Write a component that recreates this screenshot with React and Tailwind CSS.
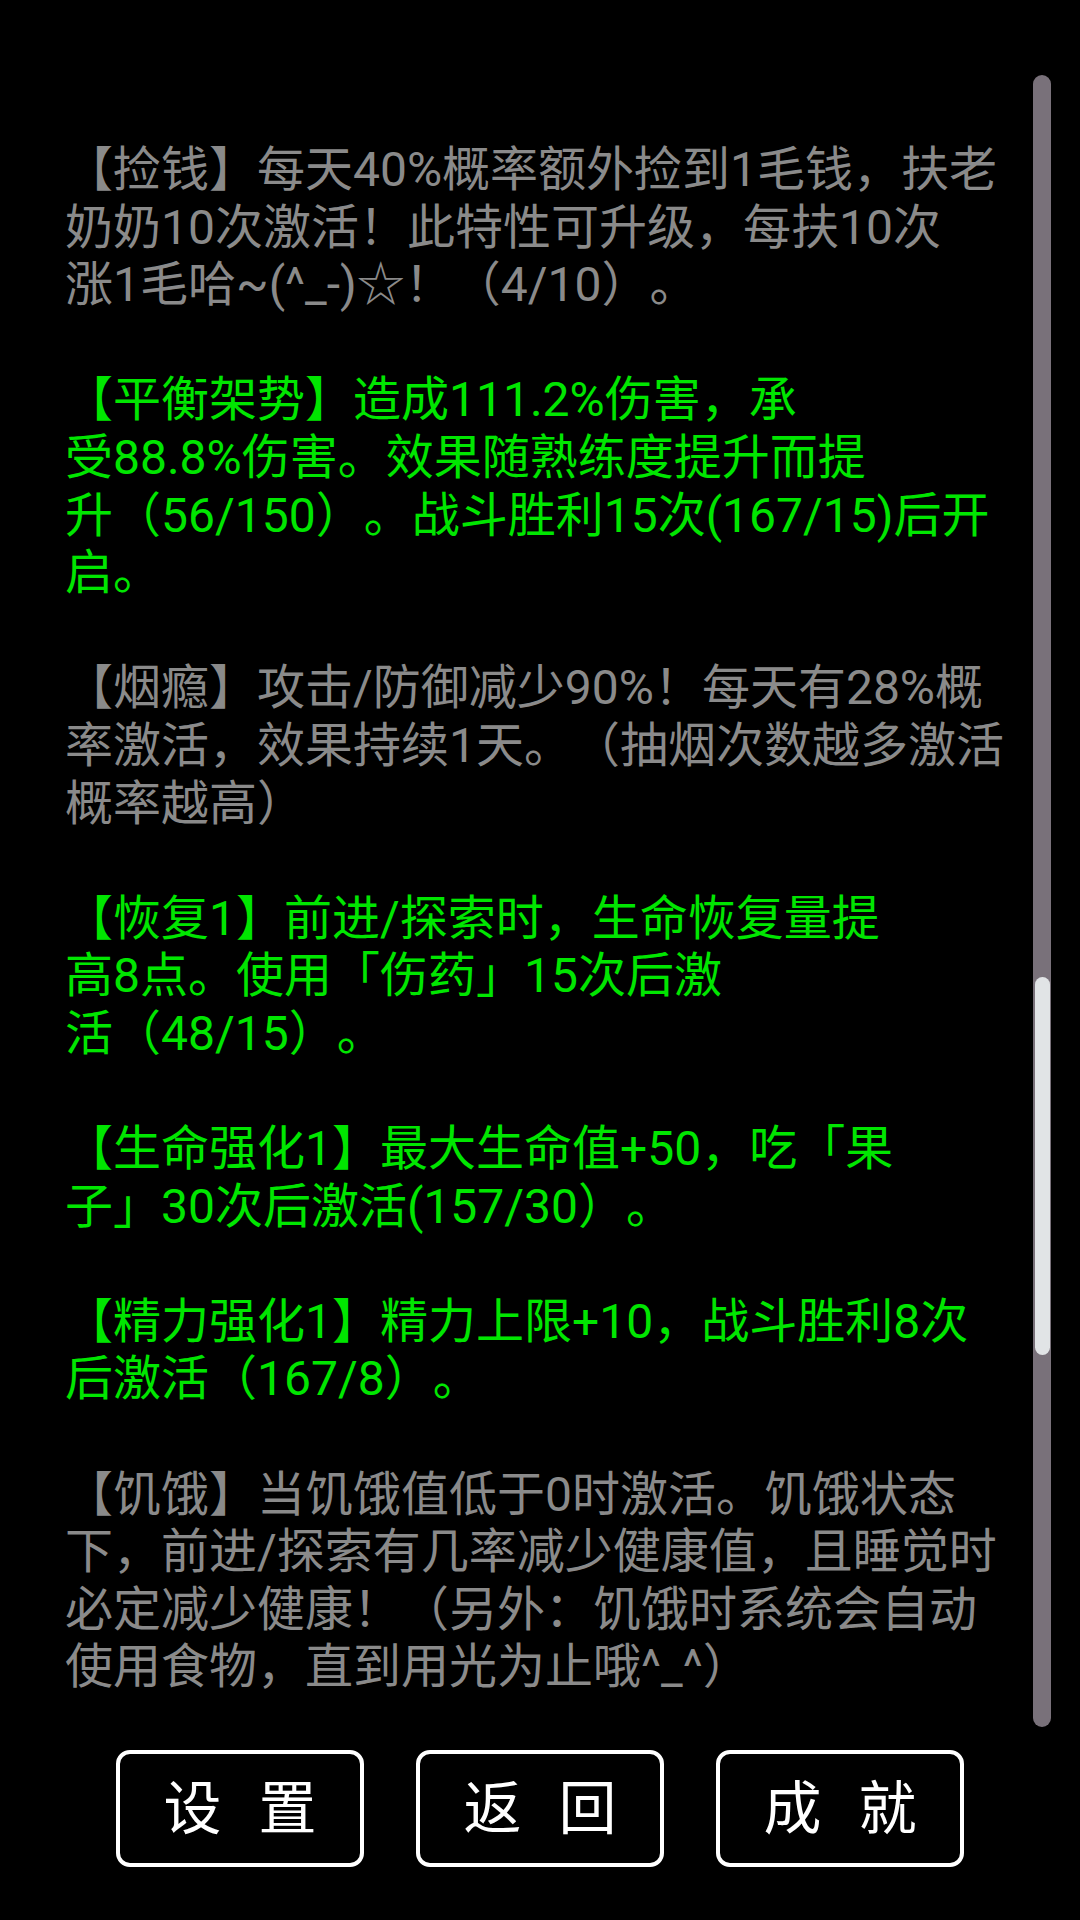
import React from "react";

const GRAY = "text-[#8a8a8a]";
const GREEN = "text-[#00e600]";

const paragraphs = [
  {
    tone: GRAY,
    lines: [
      "【捡钱】每天40%概率额外捡到1毛钱，扶老",
      "奶奶10次激活！此特性可升级，每扶10次",
      "涨1毛哈~(^_-)☆！（4/10）。",
    ],
  },
  {
    tone: GREEN,
    lines: [
      "【平衡架势】造成111.2%伤害，承",
      "受88.8%伤害。效果随熟练度提升而提",
      "升（56/150）。战斗胜利15次(167/15)后开",
      "启。",
    ],
  },
  {
    tone: GRAY,
    lines: [
      "【烟瘾】攻击/防御减少90%！每天有28%概",
      "率激活，效果持续1天。（抽烟次数越多激活",
      "概率越高）",
    ],
  },
  {
    tone: GREEN,
    lines: [
      "【恢复1】前进/探索时，生命恢复量提",
      "高8点。使用「伤药」15次后激",
      "活（48/15）。",
    ],
  },
  {
    tone: GREEN,
    lines: ["【生命强化1】最大生命值+50，吃「果", "子」30次后激活(157/30）。"],
  },
  {
    tone: GREEN,
    lines: ["【精力强化1】精力上限+10，战斗胜利8次", "后激活（167/8）。"],
  },
  {
    tone: GRAY,
    lines: [
      "【饥饿】当饥饿值低于0时激活。饥饿状态",
      "下，前进/探索有几率减少健康值，且睡觉时",
      "必定减少健康！（另外：饥饿时系统会自动",
      "使用食物，直到用光为止哦^_^）",
    ],
  },
];

const Button = ({ a, b }) => (
  <button className="w-[248px] h-[117px] border-[4px] border-white rounded-[14px] bg-black flex items-center justify-center gap-[37px] text-white text-[58px] leading-none">
    <span>{a}</span>
    <span>{b}</span>
  </button>
);

export default function App() {
  return (
    <div className="w-[1080px] h-[1920px] bg-black overflow-hidden flex flex-col font-['Roboto','Noto_Sans_CJK_SC',sans-serif] [text-spacing-trim:space-all]">
      <div className="mt-[77px] h-[1650px] flex">
        {/* text list */}
        <div className="flex-1 overflow-hidden pl-[65px] pt-[64px]">
          <div className="flex flex-col gap-[57.6px]">
            {paragraphs.map((p, i) => (
              <div key={i} className={p.tone}>
                {p.lines.map((l, j) => (
                  <div key={j} className="h-[57.6px] text-[48px] leading-[57.6px] whitespace-nowrap">
                    {l}
                  </div>
                ))}
              </div>
            ))}
          </div>
        </div>
        {/* scrollbar */}
        <div className="w-[18px] mr-[29px] -mt-[2px] h-[1652px] rounded-full bg-[#79717a] flex flex-col items-center pt-[902px]">
          <div className="w-[15px] h-[378px] rounded-full bg-[#e1e4e6]" />
        </div>
      </div>
      <div className="mt-[23px] flex justify-center gap-[52px]">
        <Button a="设" b="置" />
        <Button a="返" b="回" />
        <Button a="成" b="就" />
      </div>
    </div>
  );
}
